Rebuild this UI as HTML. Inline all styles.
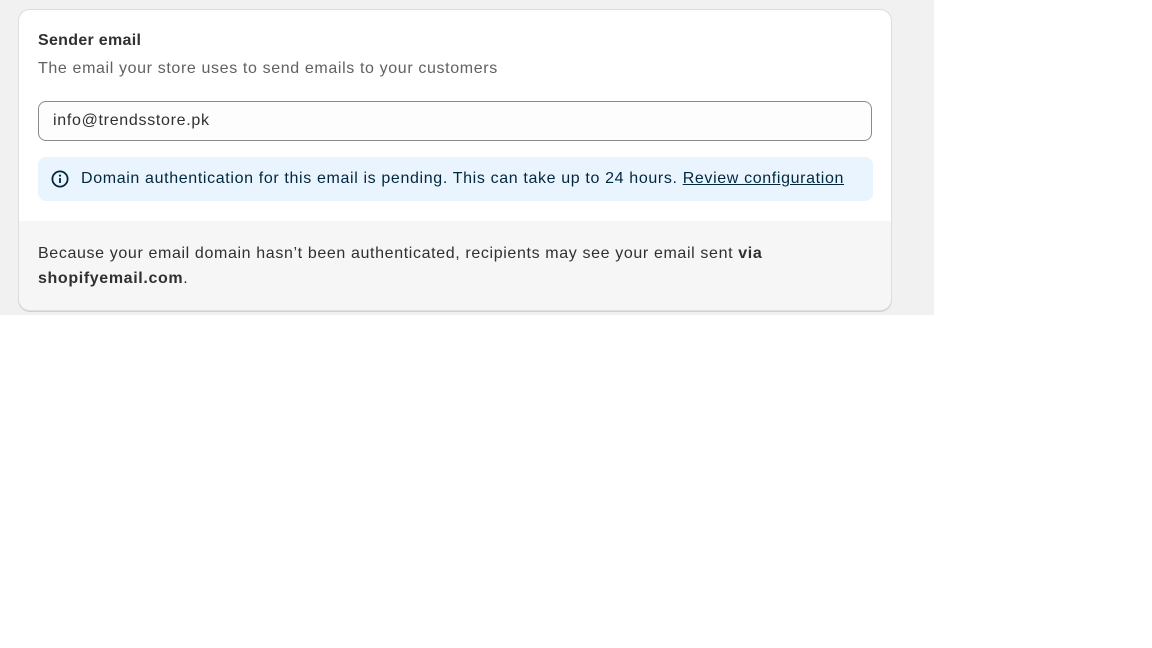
<!DOCTYPE html>
<html><head><style>
body{margin:0;width:1152px;height:648px;background:#fff;font-family:"Liberation Sans",sans-serif;position:relative;overflow:hidden}
.bg{position:absolute;left:0;top:0;width:934px;height:315px;background:#f1f1f1}
.card{position:absolute;left:18px;top:9px;width:872px;height:300px;background:#fff;border:1px solid #dedede;border-radius:12px;overflow:hidden;box-shadow:0 1px 0 #d0d0d0}
.t{position:absolute;left:19px;top:22px;font-size:16px;font-weight:bold;color:#303030;letter-spacing:0.3px}
.s{position:absolute;left:19px;top:50px;font-size:16px;color:#616161;letter-spacing:0.63px}
.in{position:absolute;left:19px;top:91px;width:832px;height:38px;border:1px solid #8a8a8a;border-radius:8px;background:#fdfdfd}
.in span{position:absolute;left:14px;top:10px;font-size:16px;color:#303030;letter-spacing:0.7px}
.b{position:absolute;left:19px;top:147px;width:835px;height:44px;background:#eaf4ff;border-radius:8px}
.b svg{position:absolute;left:13px;top:13px}
.b span{position:absolute;left:43px;top:13px;font-size:16px;color:#00283e;letter-spacing:0.64px;white-space:nowrap}
.b u{text-decoration:underline}
.f{position:absolute;left:0;top:211px;width:872px;height:89px;background:#f6f6f6}
.f p{margin:0;position:absolute;left:19px;top:20px;font-size:16px;line-height:25px;color:#303030;width:760px;letter-spacing:0.63px}
</style></head><body>
<div class="bg"></div>
<div class="card">
<div class="t">Sender email</div>
<div class="s">The email your store uses to send emails to your customers</div>
<div class="in"><span>info@trendsstore.pk</span></div>
<div class="b"><svg width="18" height="18" viewBox="0 0 18 18"><circle cx="9" cy="9" r="7.6" fill="none" stroke="#00283e" stroke-width="1.8"/><rect x="8.1" y="8" width="1.8" height="5" fill="#00283e"/><circle cx="9" cy="5.6" r="1.1" fill="#00283e"/></svg><span>Domain authentication for this email is pending. This can take up to 24 hours. <u>Review configuration</u></span></div>
<div class="f"><p>Because your email domain hasn’t been authenticated, recipients may see your email sent <b>via shopifyemail.com</b>.</p></div>
</div>
</body></html>
